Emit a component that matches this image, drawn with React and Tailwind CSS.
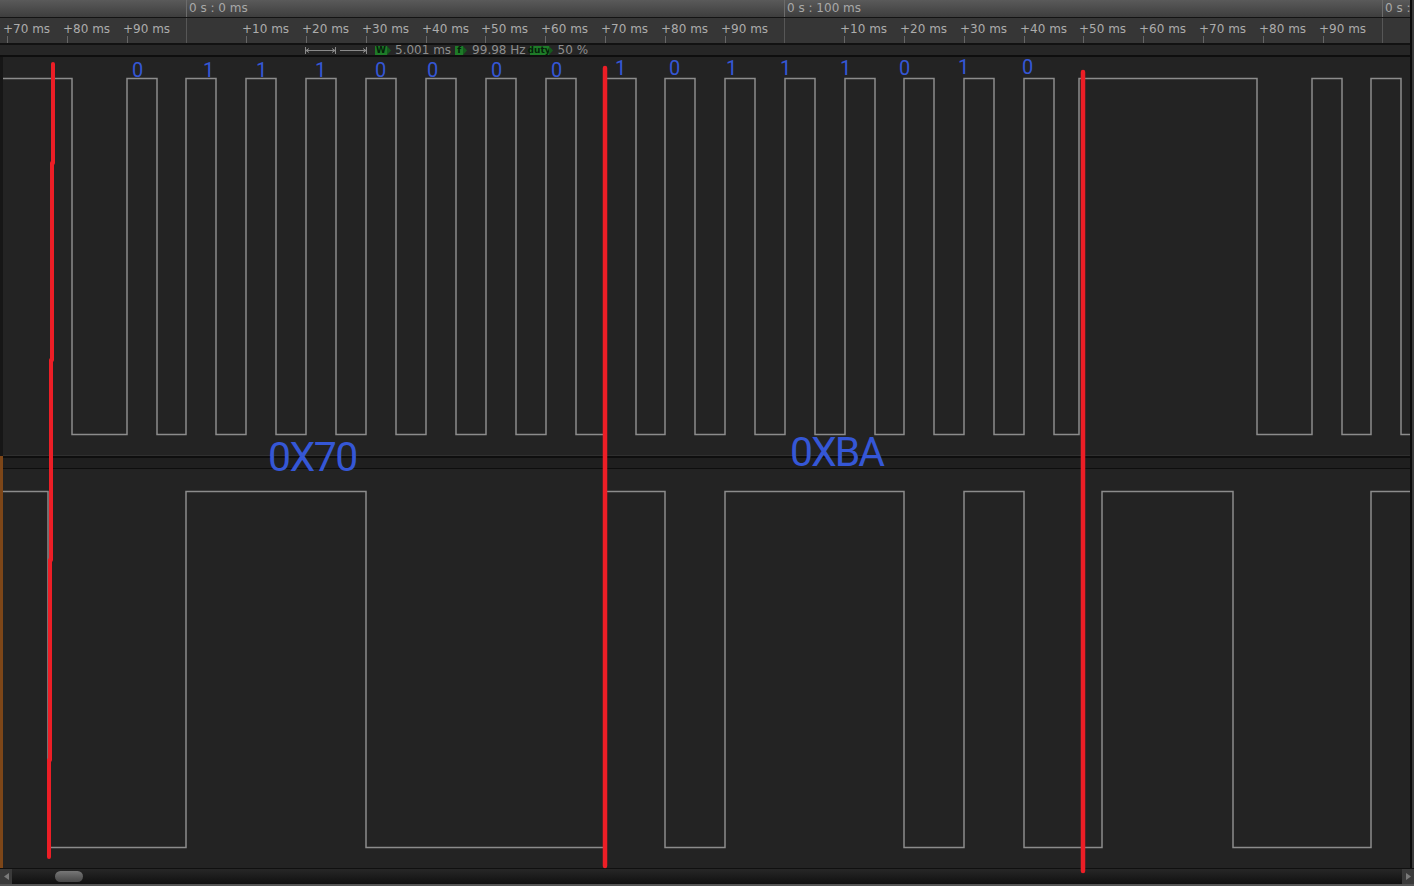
import React from 'react';

const STEP = 59.8;
const T0 = 186.4;
const ticks = Array.from({ length: 24 }, (_, i) => i - 3).map((k) => ({ k, x: T0 + STEP * k }));

const upperEdges = [72, 127, 157, 186, 216, 246, 276, 306, 336, 366, 396, 426, 456, 486, 516, 546, 576, 606, 636, 665, 695, 725, 755, 785, 815, 845, 875, 904, 934, 964, 994, 1024, 1054, 1079, 1257, 1312, 1342, 1371, 1401];
const lowerEdges = [48, 186, 366, 606, 665, 725, 904, 964, 1024, 1102, 1233, 1371];

function wavePath(edges, hi, lo, x0, x1) {
  let y = hi;
  let d = `M${x0} ${y}`;
  for (const e of edges) {
    d += ` H${e}`;
    y = y === hi ? lo : hi;
    d += ` V${y}`;
  }
  d += ` H${x1}`;
  return d;
}

const bits = [
  [132, 63, '0'], [203, 63, '1'], [256, 63, '1'], [315, 63, '1'], [375, 63, '0'], [427, 63, '0'],
  [491, 63, '0'], [551, 63, '0'], [615, 61, '1'], [669, 61, '0'], [726, 61, '1'], [780, 61, '1'],
  [840, 61, '1'], [899, 61, '0'], [958, 60, '1'], [1022, 60, '0'],
];

function majorLabel(k) {
  if (k >= 20) return '0 s :';
  return `0 s : ${(k / 10) * 100} ms`;
}
function minorLabel(k) {
  return `+${(((k % 10) + 10) % 10) * 10} ms`;
}

function Badge({ children, w }) {
  return (
    <span className="flex items-center">
      <span
        className="flex h-[9px] items-center justify-center bg-[#1e7b28] text-[9px] leading-none font-bold text-[#05210a]"
        style={{ width: w }}
      >
        {children}
      </span>
      <svg width="4" height="9" viewBox="0 0 4 9" className="block">
        <path d="M0 0 L4 4.5 L0 9 Z" fill="#155a1d" />
      </svg>
    </span>
  );
}

export default function App() {
  return (
    <div className="relative h-[886px] w-[1414px] overflow-hidden bg-[#3b3b3b] font-['DejaVu_Sans',sans-serif]">
      <div className="flex w-[1412px] flex-col border-r-2 border-[#0c0c0c]">
        {/* Row 1: major time labels */}
        <div className="relative h-[18px] overflow-hidden border-b border-[#141414] bg-gradient-to-b from-[#5a5a5a] to-[#3e3e3e]">
          {ticks.filter((t) => t.k % 10 === 0).map((t) => (
            <React.Fragment key={t.k}>
              <div className="absolute top-0 h-full w-px bg-[#6c6c6c]" style={{ left: Math.round(t.x) }} />
              <div
                className="absolute top-[1px] text-[12px] leading-[14px] whitespace-nowrap text-[#a8a8a8]"
                style={{ left: Math.round(t.x) + 3 }}
              >
                {majorLabel(t.k)}
              </div>
            </React.Fragment>
          ))}
        </div>
        {/* Row 2: minor ruler */}
        <div className="relative h-[27px] overflow-hidden border-b-2 border-[#121212] bg-[#363636]">
          {ticks.map((t) =>
            t.k % 10 === 0 ? (
              <div key={t.k} className="absolute top-0 h-full w-px bg-[#575757]" style={{ left: Math.round(t.x) }} />
            ) : (
              <React.Fragment key={t.k}>
                <div className="absolute bottom-0 h-[7px] w-px bg-[#666666]" style={{ left: Math.round(t.x) }} />
                <div
                  className="absolute top-[4px] text-[12px] leading-[14px] whitespace-nowrap text-[#acacac]"
                  style={{ left: Math.round(t.x) - 4 }}
                >
                  {minorLabel(t.k)}
                </div>
              </React.Fragment>
            )
          )}
        </div>
        {/* Row 3: measurements */}
        <div className="flex h-[12px] items-center border-b-2 border-[#0e0e0e] bg-[#262626] pl-[305px] text-[12px] leading-[10px] text-[#8e8e8e]">
          <svg width="31" height="9" viewBox="0 0 31 9" className="block">
            <g stroke="#8a8a8a" strokeWidth="1" fill="none">
              <path d="M0.5 1 V8" />
              <path d="M30.5 1 V8" />
              <path d="M1 4.5 H30" />
              <path d="M4 2.5 L1 4.5 L4 6.5" />
              <path d="M27 2.5 L30 4.5 L27 6.5" />
            </g>
          </svg>
          <svg width="27" height="9" viewBox="0 0 27 9" className="ml-[4px] block">
            <g stroke="#8a8a8a" strokeWidth="1" fill="none">
              <path d="M26.5 1 V8" />
              <path d="M0 4.5 H26" />
              <path d="M23 2.5 L26 4.5 L23 6.5" />
            </g>
          </svg>
          <span className="ml-[8px]"><Badge w={12}>W</Badge></span>
          <span className="ml-[4px]">5.001 ms</span>
          <span className="ml-[4px]"><Badge w={8}>f</Badge></span>
          <span className="ml-[5px]">99.98 Hz</span>
          <span className="ml-[4px]"><Badge w={19}>duty</Badge></span>
          <span className="ml-[5px]">50 %</span>
        </div>
        {/* Channel 0 */}
        <div className="h-[398px] border-l-[3px] border-[#161616] bg-[#232323]">
          <svg className="block h-full w-full" viewBox="3 0 1407 398" preserveAspectRatio="none">
            <path d={wavePath(upperEdges, 21.5, 377.5, 3, 1410)} fill="none" stroke="#8c8c8c" strokeWidth="1.5" />
          </svg>
        </div>
        {/* separator */}
        <div className="flex h-[14px] flex-col">
          <div className="h-px border-l-[3px] border-[#161616] bg-[#2f2f2f]" />
          <div className="h-[2px] border-l-[3px] border-[#7d4618] bg-[#0e0e0e]" />
          <div className="h-[10px] border-l-[3px] border-[#7d4618] bg-[#1f1f1f]" />
          <div className="h-px border-l-[3px] border-[#7d4618] bg-[#0e0e0e]" />
        </div>
        {/* Channel 1 */}
        <div className="h-[399px] border-l-[3px] border-[#7d4618] bg-[#232323]">
          <svg className="block h-full w-full" viewBox="3 0 1407 399" preserveAspectRatio="none">
            <path d={wavePath(lowerEdges, 22.5, 378.5, 3, 1410)} fill="none" stroke="#8c8c8c" strokeWidth="1.5" />
          </svg>
        </div>
      </div>
      {/* scrollbar */}
      <div className="h-px bg-[#101010]" />
      <div className="flex h-[15px] items-center bg-gradient-to-b from-[#272727] to-[#101010]">
        <div className="flex h-full w-[12px] items-center justify-center bg-[#3a3a3a]">
          <svg width="5" height="7" viewBox="0 0 5 7"><path d="M5 0 L0 3.5 L5 7 Z" fill="#7a7a7a" /></svg>
        </div>
        <div className="ml-[43px] h-[11px] w-[28px] rounded-full bg-gradient-to-b from-[#777777] to-[#474747]" />
        <div className="flex-1" />
        <div className="flex h-full w-[12px] items-center justify-center bg-[#3a3a3a]">
          <svg width="5" height="7" viewBox="0 0 5 7"><path d="M0 0 L5 3.5 L0 7 Z" fill="#7a7a7a" /></svg>
        </div>
      </div>
      <div className="h-[2px] bg-[#555555]" />

      {/* bit annotations */}
      {bits.map(([x, y, t], i) => (
        <div
          key={i}
          className="absolute font-['Roboto',sans-serif] text-[20px] leading-none text-[#3557d6]"
          style={{ left: x, top: y - 3 }}
        >
          {t}
        </div>
      ))}
      <div className="absolute top-[437px] left-[268px] font-['Roboto',sans-serif] text-[41px] leading-none tracking-[-1.5px] text-[#3557d6]">
        0X70
      </div>
      <div className="absolute top-[432px] left-[790px] font-['Roboto',sans-serif] text-[41px] leading-none tracking-[-2px] text-[#3557d6]">
        0XBA
      </div>

      {/* red annotation lines */}
      <svg className="pointer-events-none absolute inset-0" width="1414" height="886" viewBox="0 0 1414 886">
        <g stroke="#ec1e26" strokeWidth="4" strokeLinecap="round" fill="none">
          <path d="M53 64 V163" />
          <path d="M52 163 V360" />
          <path d="M51 360 V560" />
          <path d="M50 560 V760" />
          <path d="M49 760 V857" />
          <path d="M605 68 V866" strokeWidth="4.5" />
          <path d="M1083 72 V871" strokeWidth="4.5" />
        </g>
      </svg>
    </div>
  );
}
